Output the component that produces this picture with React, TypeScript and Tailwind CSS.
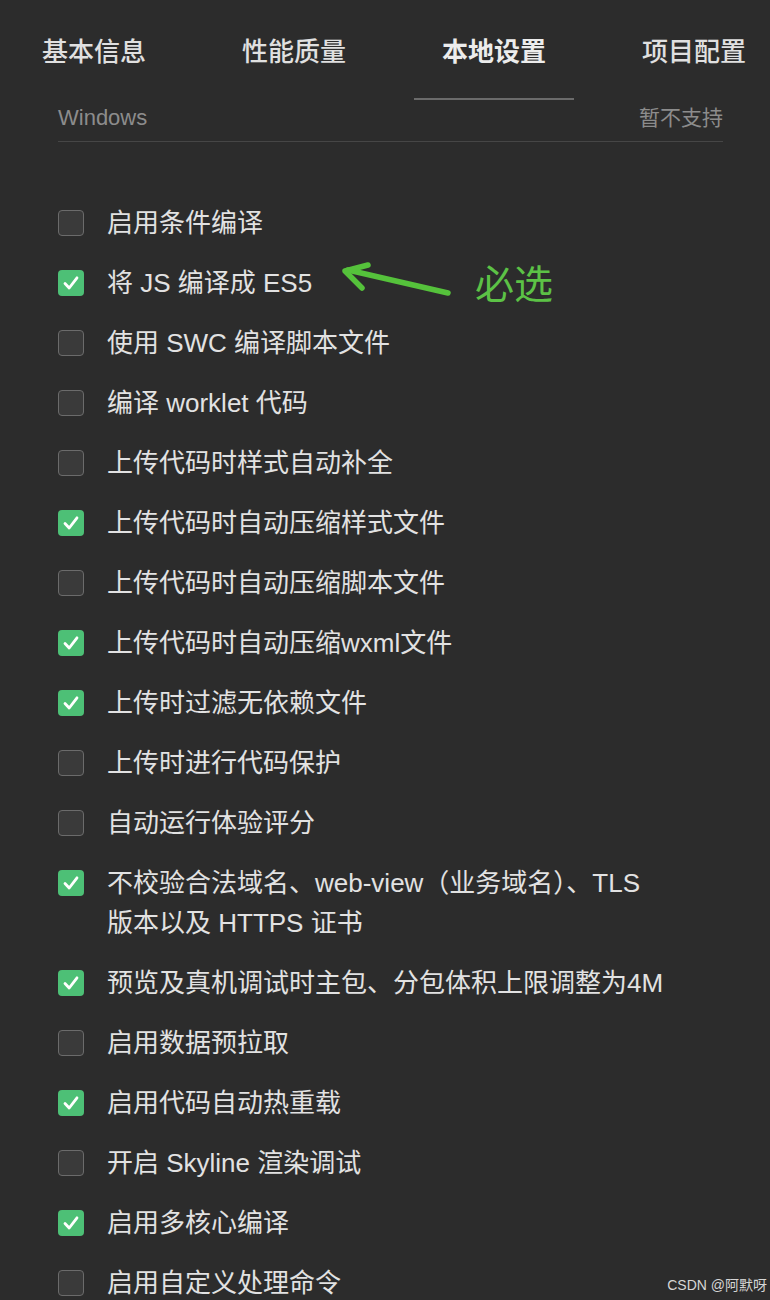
import React from "react";

const FONT = { fontFamily: '"Liberation Sans", "Noto Sans CJK SC", sans-serif' };

const tabs = [
  { label: "基本信息", active: false },
  { label: "性能质量", active: false },
  { label: "本地设置", active: true },
  { label: "项目配置", active: false },
];

type Item = { text: React.ReactNode; checked: boolean };

const items: Item[] = [
  { text: "启用条件编译", checked: false },
  { text: "将 JS 编译成 ES5", checked: true },
  { text: "使用 SWC 编译脚本文件", checked: false },
  { text: "编译 worklet 代码", checked: false },
  { text: "上传代码时样式自动补全", checked: false },
  { text: "上传代码时自动压缩样式文件", checked: true },
  { text: "上传代码时自动压缩脚本文件", checked: false },
  { text: "上传代码时自动压缩wxml文件", checked: true },
  { text: "上传时过滤无依赖文件", checked: true },
  { text: "上传时进行代码保护", checked: false },
  { text: "自动运行体验评分", checked: false },
  {
    text: (
      <>
        不校验合法域名、web-view（业务域名）、TLS
        <br />
        版本以及 HTTPS 证书
      </>
    ),
    checked: true,
  },
  { text: "预览及真机调试时主包、分包体积上限调整为4M", checked: true },
  { text: "启用数据预拉取", checked: false },
  { text: "启用代码自动热重载", checked: true },
  { text: "开启 Skyline 渲染调试", checked: false },
  { text: "启用多核心编译", checked: true },
  { text: "启用自定义处理命令", checked: false },
];

function Checkbox({ checked }: { checked: boolean }) {
  if (checked) {
    return (
      <div className="w-[26px] h-[26px] shrink-0 rounded-[4px] bg-[#4dc076] flex items-center justify-center mt-[7px]">
        <svg width="18" height="18" viewBox="0 0 18 18" fill="none">
          <path d="M3 9.5 L7.2 14 L15 3.8" stroke="#ffffff" strokeWidth="2.8" strokeLinecap="round" strokeLinejoin="round" />
        </svg>
      </div>
    );
  }
  return <div className="w-[26px] h-[26px] shrink-0 rounded-[4px] bg-[#3a3a3a] border border-[#6b6b6b] mt-[7px]" />;
}

export default function App() {
  return (
    <div className="w-[770px] h-[1300px] overflow-hidden bg-[#2c2c2c] relative" style={FONT}>
      {/* Tabs */}
      <div className="flex gap-10 pl-[14px]">
        {tabs.map((t) => (
          <div key={t.label} className="w-[160px] shrink-0 flex flex-col items-center">
            <div
              className={
                "pt-[34px] leading-[36px] text-[26px] " +
                (t.active ? "font-bold text-[#ececec]" : "font-medium text-[#e0e0e0]")
              }
            >
              {t.label}
            </div>
            <div className={"mt-[28px] h-[2px] w-full " + (t.active ? "bg-[#6b6b6b]" : "bg-transparent")} />
          </div>
        ))}
      </div>

      {/* Content */}
      <div className="pl-[58px] pr-[47px]">
        <div className="flex justify-between items-center pt-[4px] pb-[9px] leading-[28px] text-[21px] text-[#8c8c8c] border-b border-[#464646]">
          <span className="text-[22px]">Windows</span>
          <span>暂不支持</span>
        </div>

        <div className="mt-[61px] flex flex-col gap-5">
          {items.map((it, i) => (
            <div key={i} className="flex items-start gap-[23px]">
              <Checkbox checked={it.checked} />
              <div className="text-[26px] leading-[40px] text-[#e2e2e2]">{it.text}</div>
            </div>
          ))}
        </div>
      </div>

      {/* Annotation arrow */}
      <svg className="absolute left-[330px] top-[250px]" width="140" height="60" viewBox="0 0 140 60" fill="none">
        <g stroke="#55c23b" strokeWidth="5.5" strokeLinecap="round" strokeLinejoin="round">
          <path d="M118 43 L18 20" />
          <path d="M38 15 L15 21 L32 38" />
        </g>
      </svg>
      <div className="absolute left-[475px] top-[260px] text-[39px] leading-[50px] text-[#5cc246]">必选</div>

      {/* Watermark */}
      <div className="absolute right-[3px] bottom-[6px] text-[14px] leading-[18px] text-[#d6d6d6]">CSDN @阿默呀</div>
    </div>
  );
}
